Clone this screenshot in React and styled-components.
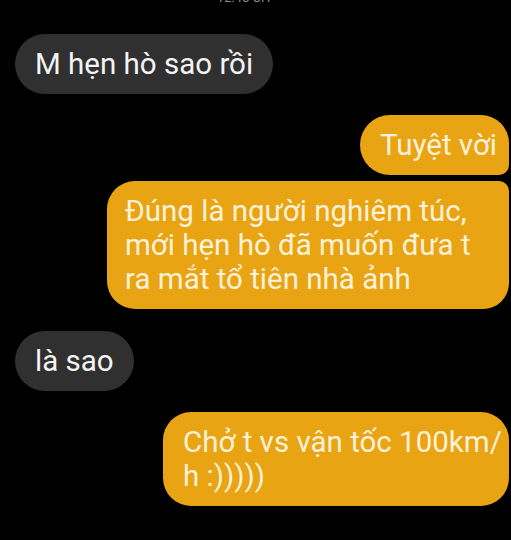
import React from 'react'
import styled, { createGlobalStyle } from 'styled-components'

const GlobalStyle = createGlobalStyle`
  html, body {
    margin: 0;
    padding: 0;
    background: #000;
  }
  body {
    font-family: Roboto, 'Noto Sans', sans-serif;
  }
`

const Screen = styled.div`
  width: 511px;
  height: 540px;
  overflow: hidden;
  background: #000;
  display: flex;
  flex-direction: column;
`

// timestamp above the thread, mostly scrolled out of view
const Stamp = styled.div`
  height: 4px;
  overflow: hidden;
  display: flex;
  justify-content: center;
  align-items: flex-end;
  color: #8a8a8a;
  font-size: 13px;
  line-height: 13px;
  padding-right: 24px;
`

const Thread = styled.div`
  display: flex;
  flex-direction: column;
  padding: 30px 2px 0 15px;
`

const Row = styled.div`
  display: flex;
  justify-content: ${({ mine }) => (mine ? 'flex-end' : 'flex-start')};
  margin-top: ${({ gap }) => gap}px;
`

const Bubble = styled.div`
  box-sizing: border-box;
  width: fit-content;
  max-width: ${({ maxW }) => (maxW ? `${maxW}px` : 'none')};
  padding: 13px ${({ padR }) => padR || 20}px 13px ${({ padL }) => padL || 20}px;
  font-size: 29.5px;
  line-height: 34px;
  background: ${({ mine }) => (mine ? '#e9a414' : '#303030')};
  color: ${({ mine }) => (mine ? '#fdf1d8' : '#f4f4f4')};
  border-radius: ${({ corners }) => corners || '31px'};
`

const App = () => {
  return (
    <Screen>
      <GlobalStyle />
      <Stamp>12:45 CH</Stamp>
      <Thread>
        <Row gap={0}>
          <Bubble>M hẹn hò sao rồi</Bubble>
        </Row>
        <Row mine gap={21}>
          <Bubble mine padR={12} corners="30px 28px 10px 30px">Tuyệt vời</Bubble>
        </Row>
        <Row mine gap={6}>
          <Bubble mine maxW={402} padL={18} padR={30} corners="28px 10px 26px 28px">
            Đúng là người nghiêm túc, mới hẹn hò đã muốn đưa t ra mắt tổ tiên nhà ảnh
          </Bubble>
        </Row>
        <Row gap={22}>
          <Bubble>là sao</Bubble>
        </Row>
        <Row mine gap={21}>
          <Bubble mine maxW={346} padR={6} corners="28px">
            Chở t vs vận tốc 100km/<wbr />h :)))))
          </Bubble>
        </Row>
      </Thread>
    </Screen>
  )
}

export default App
